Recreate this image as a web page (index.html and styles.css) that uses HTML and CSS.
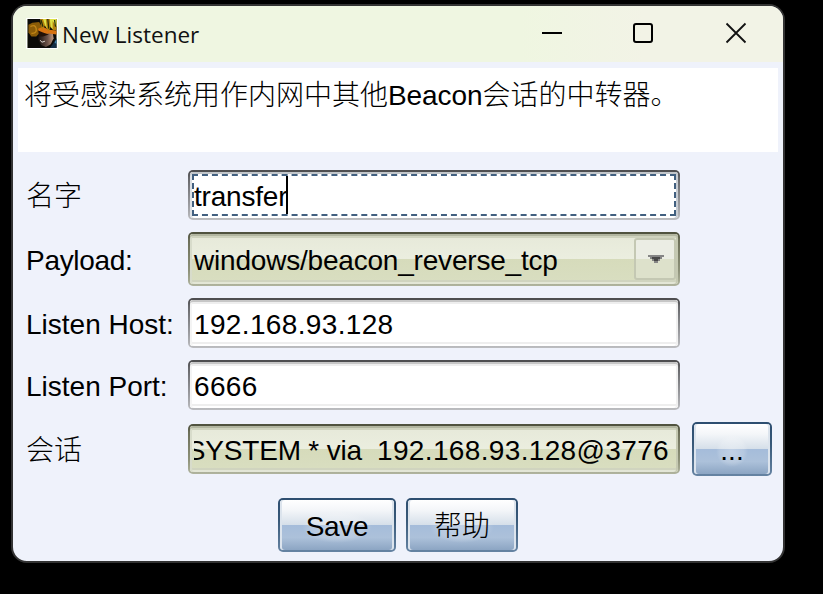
FILE: index.html
```html
<!DOCTYPE html>
<html lang="zh-CN">
<head>
<meta charset="utf-8">
<title>New Listener</title>
<link rel="stylesheet" href="styles.css">
</head>
<body>
<main class="window">
  <header class="titlebar">
    <svg class="app-icon" viewBox="0 0 30 30" aria-hidden="true">
      <defs>
        <linearGradient id="face" x1="0" x2="1"><stop offset="0" stop-color="#17110f"/><stop offset=".6" stop-color="#6a5148"/><stop offset="1" stop-color="#c39a80"/></linearGradient>
      </defs>
      <rect width="30" height="30" fill="#0b0a08"/>
      <path d="M1 6L5 4L12 3L15 8L13 14L9 18L4 18L1 14Z" fill="#8a5c08"/>
      <path d="M3 8Q8 5 9 10T4 15" fill="none" stroke="#bd8316" stroke-width="1.500"/>
      <path d="M12 15L26 14L27 20L24 26L19 29L14 27L11 21Z" fill="url(#face)"/>
      <path d="M11 10L16 8L22 11L30 12V16L22 15L16 16L12 15Z" fill="#d87312"/>
      <path d="M11 12L16 14L22 16L16 18L12 18Z" fill="#231208"/>
      <path d="M13 0H30V11L27 12L24 8L22 13L18 7L15 11Z" fill="#b4830d"/>
      <path d="M16 0L18 6L20 10L19 0M23 0L24 8L26 11L26 2L30 8V0Z" fill="#dce044"/>
      <path d="M21 0L22 10M14 1L16 8M28 1L29 8" stroke="#27300a" stroke-width="1.300"/>
      <path d="M13 22L15 24L18 23" fill="none" stroke="#e5dfda" stroke-width="1"/>
      <path d="M26 26L30 20V30H23Z" fill="#142e45"/>
      <path d="M28 24L30 21V26Z" fill="#4385ad"/>
    </svg>
    <h1 class="title">New Listener</h1>
    <svg class="controls" viewBox="0 0 208 24" aria-hidden="true">
      <path d="M2 13H22" stroke="#000" stroke-width="2"/>
      <rect x="94" y="4" width="18" height="18" rx="2" fill="none" stroke="#000" stroke-width="2"/>
      <path d="M186.500 3.500L205.500 22.500M205.500 3.500L186.500 22.500" stroke="#111" stroke-width="1.800"/>
    </svg>
  </header>
  <p class="description">将受感染系统用作内网中其他<span class="latin">Beacon</span>会话的中转器。</p>
  <form class="form">
    <div class="row row-name">
      <span class="label">名字</span>
      <div class="field focused"><span class="typed">transfer</span></div>
    </div>
    <div class="row row-payload">
      <span class="label tight">Payload:</span>
      <div class="field olive combo"><span class="choice">windows/beacon_reverse_tcp</span>
        <span class="drop"><svg width="16" height="8" viewBox="0 0 16 8"><path d="M0 0H16V2H14V4H12V6H10V8H6V6H4V4H2V2H0Z" fill="#858585"/><path d="M4 2H12V4H10V6H6V4H4Z" fill="#484848"/></svg></span>
      </div>
    </div>
    <div class="row row-host">
      <span class="label">Listen Host:</span>
      <div class="field digits">192.168.93.128</div>
    </div>
    <div class="row row-port">
      <span class="label">Listen Port:</span>
      <div class="field digits">6666</div>
    </div>
    <div class="row row-session">
      <span class="label">会话</span>
      <div class="field olive"><span class="clip"><span class="session">SYSTEM * via&nbsp; </span><span class="digits">192.168.93.128@3776</span></span></div>
      <button type="button" class="button browse"><span>...</span></button>
    </div>
    <div class="actions">
      <button type="button" class="button save"><span>Save</span></button>
      <button type="button" class="button help"><span>帮助</span></button>
    </div>
  </form>
</main>
</body>
</html>
```

FILE: styles.css
```css
* { box-sizing: border-box; }

body {
  margin: 0;
  padding: 4px 0 0 11px;
  height: 594px;
  overflow: hidden;
  background: #000;
  color: #000;
  font: 300 28px/32px "Liberation Sans", "Noto Sans CJK SC", sans-serif;
}

.window {
  width: 774px;
  height: 559px;
  border: 2px solid #333;
  border-radius: 16px;
  background: #eff2fb;
  overflow: hidden;
}

.titlebar {
  display: flex;
  align-items: flex-start;
  height: 56px;
  padding: 12px 35px 0 13px;
  background: linear-gradient(90deg, #eff6e1 0%, #eff6e1 66%, #f2f3e6 82%);
}

.app-icon {
  width: 32px;
  height: 31px;
  border: 1px solid #fff;
}

.title {
  flex: 1;
  margin: 1px 0 0 4px;
  font: 400 22.5px/32px "Open Sans", sans-serif;
  color: #111;
}

.controls {
  width: 208px;
  height: 24px;
  margin-top: 2px;
}

.description {
  height: 84px;
  margin: 6px 5px 0;
  padding: 12px 6px;
  background: #fff;
  white-space: nowrap;
}

.latin { letter-spacing: -.1px; }

.form { padding: 18px 11px 0 13px; }

.row {
  display: grid;
  grid-template-columns: 162px 492px 80px;
  align-items: center;
}

.row-name { height: 50px; margin-bottom: 12px; }
.row-payload { height: 54px; margin-bottom: 12px; }
.row-host { height: 50px; margin-bottom: 12px; }
.row-port { height: 50px; margin-bottom: 12px; }

.row-session {
  grid-template-columns: 162px 492px 12px 80px;
  height: 54px;
  margin-bottom: 22px;
}

.row-session .browse { grid-column: 4; }

.label {
  padding-top: 4px;
  white-space: nowrap;
}

.tight { letter-spacing: -.3px; }

.field {
  display: flex;
  align-items: center;
  height: 50px;
  padding: 4px 4px 0;
  border: 2px solid transparent;
  border-radius: 5px;
  background:
    linear-gradient(#fff, #fff) padding-box,
    linear-gradient(#4e4e50 0 2px, #66676a 8px, #a0a1a5 75%, #bcbdc0) border-box;
  box-shadow: inset 0 2px 0 #c6c6c6, inset 2px 0 0 #f4f4f4, inset -2px 0 0 #f0f0f0, inset 0 4px 0 #eee, inset 0 -2px 0 #fff, inset 0 -4px 0 #eee;
  white-space: pre;
}

.digits { letter-spacing: .35px; }

.focused {
  padding: 0;
  box-shadow: inset 0 2px 0 #c2c6ca, inset 2px 0 0 #dde1e5, inset -2px 0 0 #c8cdd3;
}

.typed {
  flex: 1;
  height: 42px;
  margin: 0 2px;
  border: 2px dashed #426080;
  line-height: 42px;
  letter-spacing: -.2px;
}

.typed::after {
  content: "";
  display: inline-block;
  width: 2px;
  height: 38px;
  margin-left: -1px;
  background: #000;
  vertical-align: top;
}

.olive {
  background:
    linear-gradient(#e6e9d9, #ebeedf 50%, #d6dbbb 50%, #d9dec1) padding-box,
    linear-gradient(#50533f 0 2px, #6c6f59 8px, #8c9078 70%, #b0b49e) border-box;
  box-shadow: inset 0 2px 0 #b2b6a0, inset 2px 0 0 #d8dccb, inset -2px 0 0 #c5c9b2, inset 0 4px 0 #cfd3be, inset 0 -2px 0 #e3e6d6, inset 0 -4px 0 #d0d4bf;
}

.combo {
  height: 54px;
  justify-content: space-between;
  padding: 0 2px 0 4px;
}

.choice {
  padding-top: 4px;
  letter-spacing: -.2px;
}

.drop {
  display: grid;
  place-items: center;
  width: 42px;
  height: 42px;
  padding-left: 2px;
  border: 2px solid #c4c8b3;
  border-radius: 3px;
  background: linear-gradient(#ebede4 50%, #dde1cb 50%);
}

.clip {
  display: flex;
  justify-content: flex-end;
  width: 475px;
  overflow: hidden;
}

.session { letter-spacing: -.2px; }

.button {
  display: grid;
  place-items: center;
  height: 54px;
  padding: 3px 0 0;
  border: 2px solid transparent;
  border-radius: 5px;
  background:
    linear-gradient(#fff, #f4f6f9 20%, #d5dfe9 50%, #a5bcda 50%, #acc1da 75%, #8ca5c3) padding-box,
    linear-gradient(#2d4e70, #375878 40%, #6684a3) border-box;
  box-shadow: inset 2px 0 0 #dce4ed, inset -2px 0 0 #dce4ed;
  font: inherit;
  color: #000;
}

.button span {
  padding: 0 4px;
  background: radial-gradient(closest-side, rgba(255, 255, 255, .3), rgba(255, 255, 255, .16) 75%, transparent);
}

.browse { width: 80px; }
.save { width: 118px; letter-spacing: -.3px; }
.help { width: 112px; }

.actions {
  display: flex;
  gap: 10px;
  padding-left: 252px;
}
```
